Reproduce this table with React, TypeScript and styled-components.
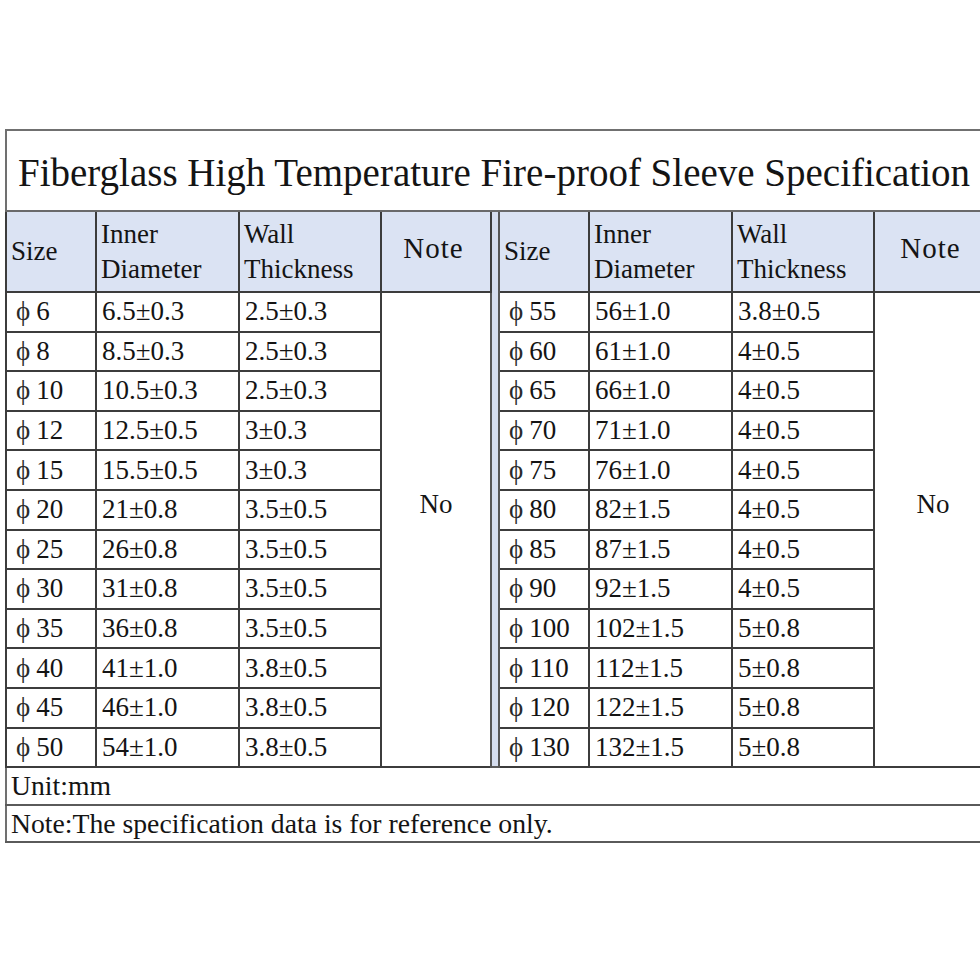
import React from "react";
import styled, { createGlobalStyle } from "styled-components";

const Global = createGlobalStyle`
  html, body {
    margin: 0;
    padding: 0;
    background: #ffffff;
    overflow: hidden;
  }
  body {
    font-family: "Liberation Serif", "Times New Roman", serif;
    color: #141414;
  }
`;

const Page = styled.div`
  width: 980px;
  height: 980px;
  padding: 129px 0 0 5px;
  box-sizing: border-box;
  overflow: hidden;
`;

const Table = styled.table`
  width: 986px;
  border-collapse: collapse;
  table-layout: fixed;
  border: 2px solid #707070;
  font-size: 27px;
`;

const TitleCell = styled.td`
  height: 75px;
  padding: 4px 10px 0 0;
  text-align: center;
  font-size: 39px;
  border-bottom: 2px solid #6a6a6a;
  white-space: nowrap;
`;

const HeadCell = styled.td<{ $center?: boolean }>`
  height: 79px;
  background: #dbe3f3;
  border: 2px solid #3c3c3c;
  border-top: none;
  padding: 0 0 0 ${(p) => (p.$center ? 0 : 4)}px;
  text-align: ${(p) => (p.$center ? "center" : "left")};
  line-height: 35px;
  vertical-align: middle;
`;

const NoteHead = styled(HeadCell)`
  height: 73px;
  font-size: 29px;
  letter-spacing: 1px;
  padding-bottom: 6px;
  padding-right: 5px;
`;

const Divider = styled.td`
  background: #d5ddee;
  border-left: 2px solid #555;
  border-right: 2px solid #555;
  padding: 0;
`;

const Cell = styled.td<{ $size?: boolean }>`
  height: 37.6px;
  padding: 0 0 0 ${(p) => (p.$size ? 9 : 5)}px;
  border: 2px solid #3c3c3c;
  white-space: nowrap;
  vertical-align: middle;
  line-height: 1;
`;

const Phi = styled.span`
  display: inline-block;
  margin-right: 6px;
  color: #2a2a2a;
`;

const NoteCell = styled.td`
  border: 2px solid #3c3c3c;
  text-align: center;
  vertical-align: middle;
  padding: 0 0 50px 0;
`;

const FootCell = styled.td<{ $h: number }>`
  height: ${(p) => p.$h}px;
  padding: 0 0 0 4px;
  font-size: 27.7px;
  border-top: 2px solid #5a5a5a;
  border-bottom: 2px solid #5a5a5a;
  vertical-align: middle;
  white-space: nowrap;
  line-height: 1;
`;

const PHI = "\u03D5";

const left: [string, string, string][] = [
  ["6", "6.5±0.3", "2.5±0.3"],
  ["8", "8.5±0.3", "2.5±0.3"],
  ["10", "10.5±0.3", "2.5±0.3"],
  ["12", "12.5±0.5", "3±0.3"],
  ["15", "15.5±0.5", "3±0.3"],
  ["20", "21±0.8", "3.5±0.5"],
  ["25", "26±0.8", "3.5±0.5"],
  ["30", "31±0.8", "3.5±0.5"],
  ["35", "36±0.8", "3.5±0.5"],
  ["40", "41±1.0", "3.8±0.5"],
  ["45", "46±1.0", "3.8±0.5"],
  ["50", "54±1.0", "3.8±0.5"],
];

const right: [string, string, string][] = [
  ["55", "56±1.0", "3.8±0.5"],
  ["60", "61±1.0", "4±0.5"],
  ["65", "66±1.0", "4±0.5"],
  ["70", "71±1.0", "4±0.5"],
  ["75", "76±1.0", "4±0.5"],
  ["80", "82±1.5", "4±0.5"],
  ["85", "87±1.5", "4±0.5"],
  ["90", "92±1.5", "4±0.5"],
  ["100", "102±1.5", "5±0.8"],
  ["110", "112±1.5", "5±0.8"],
  ["120", "122±1.5", "5±0.8"],
  ["130", "132±1.5", "5±0.8"],
];

const widths = [90, 143, 142, 110, 8, 90, 143, 142, 118];

export default function App() {
  return (
    <>
      <Global />
      <Page>
        <Table>
          <colgroup>
            {widths.map((w, i) => (
              <col key={i} style={{ width: w }} />
            ))}
          </colgroup>
          <tbody>
            <tr>
              <TitleCell colSpan={9}>
                Fiberglass High Temperature Fire-proof Sleeve Specification
              </TitleCell>
            </tr>
            <tr>
              <HeadCell>Size</HeadCell>
              <HeadCell>
                Inner
                <br />
                Diameter
              </HeadCell>
              <HeadCell>
                Wall
                <br />
                Thickness
              </HeadCell>
              <NoteHead $center>Note</NoteHead>
              <Divider rowSpan={13} />
              <HeadCell>Size</HeadCell>
              <HeadCell>
                Inner
                <br />
                Diameter
              </HeadCell>
              <HeadCell>
                Wall
                <br />
                Thickness
              </HeadCell>
              <NoteHead $center>Note</NoteHead>
            </tr>
            {left.map((l, i) => {
              const r = right[i];
              return (
                <tr key={i}>
                  <Cell $size>
                    <Phi>{PHI}</Phi>
                    {l[0]}
                  </Cell>
                  <Cell>{l[1]}</Cell>
                  <Cell>{l[2]}</Cell>
                  {i === 0 && <NoteCell rowSpan={12}>No</NoteCell>}
                  <Cell $size>
                    <Phi>{PHI}</Phi>
                    {r[0]}
                  </Cell>
                  <Cell>{r[1]}</Cell>
                  <Cell>{r[2]}</Cell>
                  {i === 0 && <NoteCell rowSpan={12}>No</NoteCell>}
                </tr>
              );
            })}
            <tr>
              <FootCell colSpan={9} $h={36}>
                Unit:mm
              </FootCell>
            </tr>
            <tr>
              <FootCell colSpan={9} $h={35}>
                Note:The specification data is for reference only.
              </FootCell>
            </tr>
          </tbody>
        </Table>
      </Page>
    </>
  );
}
